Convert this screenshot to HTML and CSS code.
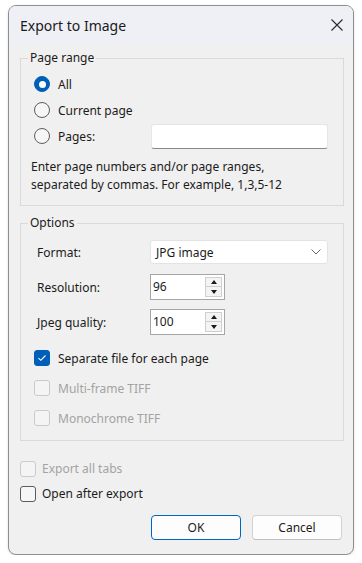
FILE: index.html
```html
<!DOCTYPE html>
<html>
<head>
<meta charset="utf-8">
<link rel="stylesheet" href="styles.css">
</head>
<body>
<div class="window">
  <div class="titlebar">
    <span class="title">Export to Image</span>
    <svg class="close" width="14" height="14" viewBox="0 0 14 14"><path d="M1.5 1.5L12.5 12.5M12.5 1.5L1.5 12.5" stroke="#2b2b2b" stroke-width="1.1" fill="none"/></svg>
  </div>
  <div class="content">
    <fieldset class="group range">
      <legend>Page range</legend>
      <div class="opt-row"><span class="radio checked"></span><span>All</span></div>
      <div class="opt-row"><span class="radio"></span><span>Current page</span></div>
      <div class="opt-row"><span class="radio"></span><span class="pages-label">Pages:</span><span class="textbox"></span></div>
      <p class="hint">Enter page numbers and/or page ranges,<br>separated by commas. For example, 1,3,5-12</p>
    </fieldset>
    <fieldset class="group options">
      <legend>Options</legend>
      <div class="field-row first">
        <span class="field-label">Format:</span>
        <div class="select"><span>JPG image</span><svg width="10" height="6" viewBox="0 0 10 6"><path d="M0.5 0.5L5 5L9.5 0.5" stroke="#6a6a6a" fill="none" stroke-width="1"/></svg></div>
      </div>
      <div class="field-row">
        <span class="field-label">Resolution:</span>
        <div class="spin"><span class="spin-value">96</span><div class="spin-btns"><span class="spin-btn"><span class="tri up"></span></span><span class="spin-btn"><span class="tri down"></span></span></div></div>
      </div>
      <div class="field-row">
        <span class="field-label">Jpeg quality:</span>
        <div class="spin"><span class="spin-value">100</span><div class="spin-btns"><span class="spin-btn"><span class="tri up"></span></span><span class="spin-btn"><span class="tri down"></span></span></div></div>
      </div>
      <div class="checks">
        <div class="check-row"><span class="check checked"><svg width="10" height="8" viewBox="0 0 10 8"><path d="M1.5 4.2L3.8 6.3L8.5 1.5" stroke="#fff" stroke-width="1.1" fill="none"/></svg></span><span>Separate file for each page</span></div>
        <div class="check-row disabled"><span class="check"></span><span>Multi-frame TIFF</span></div>
        <div class="check-row disabled"><span class="check"></span><span>Monochrome TIFF</span></div>
      </div>
    </fieldset>
    <div class="bottom-checks">
      <div class="check-row small disabled"><span class="check"></span><span>Export all tabs</span></div>
      <div class="check-row small"><span class="check"></span><span>Open after export</span></div>
    </div>
    <div class="buttons">
      <button class="btn primary">OK</button>
      <button class="btn">Cancel</button>
    </div>
  </div>
</div>
</body>
</html>
```
FILE: styles.css
```css
* { box-sizing: border-box; }
body {
  margin: 0;
  background: #ffffff;
  font-family: "Noto Sans", "Open Sans", sans-serif;
  font-size: 12px;
  color: #1b1b1b;
}
.window {
  margin: 5px 0 0 8px;
  width: 346px;
  height: 550px;
  border: 1px solid #8e8e8e;
  border-radius: 8px;
  background: #f0f0f0;
  overflow: hidden;
  display: flex;
  flex-direction: column;
  box-shadow: 0 1px 3px rgba(0,0,0,0.12);
}
.titlebar {
  height: 38px;
  flex: none;
  background: #eef0f6;
  display: flex;
  align-items: center;
  justify-content: space-between;
  padding: 0 9px 0 11px;
}
.title {
  font-size: 14px;
  color: #1a1a1a;
}
.close { display: block; }
.content {
  padding: 6px 9px 0 11px;
  display: flex;
  flex-direction: column;
}
.group {
  margin: 0;
  border: 1px solid #dadada;
  min-width: 0;
  padding: 5px 10px 11px 10px;
}
.group legend {
  padding: 0 2px;
  margin-left: -3px;
  line-height: 16px;
}
.options {
  margin-top: 9px;
  padding: 9px 10px 7px 10px;
}
.opt-row {
  height: 26px;
  display: flex;
  align-items: center;
  padding-left: 3px;
}
.radio {
  width: 16px;
  height: 16px;
  border-radius: 50%;
  border: 1px solid #5c5c5c;
  background: #f6f6f6;
  margin-right: 8px;
  flex: none;
  display: flex;
  align-items: center;
  justify-content: center;
}
.radio.checked {
  background: #005fb8;
  border-color: #005fb8;
}
.radio.checked::after {
  content: "";
  width: 7px;
  height: 7px;
  border-radius: 50%;
  background: #ffffff;
}
.pages-label { width: 93px; }
.textbox {
  width: 177px;
  height: 25px;
  background: #ffffff;
  border: 1px solid #e6e6e6;
  border-bottom: 1px solid #8a8a8a;
  border-radius: 3px;
}
.hint {
  margin: 9px 0 0 0;
  line-height: 18px;
}
.field-row {
  display: flex;
  align-items: center;
  padding-left: 6px;
  margin-top: 9px;
}
.field-row.first { margin-top: 0; }
.field-row + .field-row { margin-top: 10px; }
.field-row + .field-row + .field-row { margin-top: 9px; }
.field-label { width: 113px; flex: none; }
.select {
  width: 178px;
  height: 24px;
  background: #ffffff;
  border: 1px solid #e3e3e3;
  border-radius: 3px;
  display: flex;
  align-items: center;
  justify-content: space-between;
  padding: 0 6px 0 5px;
}
.select svg { display: block; }
.spin {
  width: 75px;
  height: 26px;
  background: #ffffff;
  border: 1px solid #a6a6a6;
  display: flex;
  align-items: center;
  justify-content: space-between;
  padding: 0 2px 0 2px;
}
.spin-value { line-height: 16px; }
.spin-btns {
  display: flex;
  flex-direction: column;
  width: 17px;
}
.spin-btn {
  height: 10px;
  border: 1px solid #cfcfcf;
  background: #f4f4f4;
  display: flex;
  align-items: center;
  justify-content: center;
}
.spin-btn + .spin-btn { border-top: none; }
.tri {
  width: 0;
  height: 0;
  border-left: 3.5px solid transparent;
  border-right: 3.5px solid transparent;
}
.tri.up { border-bottom: 4px solid #1a1a1a; }
.tri.down { border-top: 4px solid #1a1a1a; }
.checks { margin-top: 8px; }
.check-row {
  height: 30px;
  display: flex;
  align-items: center;
  padding-left: 3px;
}
.check {
  width: 16px;
  height: 16px;
  border-radius: 3px;
  border: 1px solid #5c5c5c;
  background: #f6f6f6;
  margin-right: 8px;
  flex: none;
  display: flex;
  align-items: center;
  justify-content: center;
}
.check svg { display: block; }
.check.checked {
  background: #005fb8;
  border-color: #005fb8;
}
.check-row.disabled { color: #a3a3a3; }
.check-row.disabled .check {
  border-color: #cbcbcb;
  background: #f4f4f4;
}
.bottom-checks { margin-top: 15px; }
.check-row.small {
  height: 25px;
  padding-left: 0;
}
.check-row.small .check { margin-right: 6px; }
.buttons {
  display: flex;
  justify-content: flex-end;
  gap: 11px;
  margin-top: 9px;
  padding-right: 2px;
}
.btn {
  width: 90px;
  height: 25px;
  font-family: inherit;
  font-size: 12px;
  color: #1b1b1b;
  background: #fdfdfd;
  border: 1px solid #d3d3d3;
  border-bottom-color: #c0c0c0;
  border-radius: 4px;
  padding: 0;
}
.btn.primary {
  border: 1px solid #0067c0;
}
```
